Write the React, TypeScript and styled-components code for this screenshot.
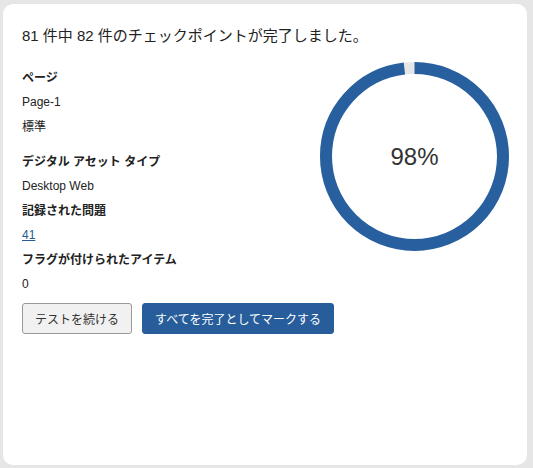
import styled, { createGlobalStyle } from "styled-components";

const GlobalStyle = createGlobalStyle`
  html, body {
    margin: 0;
    padding: 0;
    background: #e6e6e6;
  }
  body {
    font-family: "Liberation Sans", "Noto Sans CJK JP", sans-serif;
    color: #222;
  }
`;

const Page = styled.div`
  padding: 4px 6px 3px 3px;
  height: 468px;
  box-sizing: border-box;
`;

const Card = styled.div`
  background: #fff;
  border-radius: 10px;
  height: 100%;
  box-sizing: border-box;
  padding: 23px 18px 22px 19px;
`;

const Title = styled.h2`
  margin: 0 0 25px;
  font-size: 15px;
  font-weight: normal;
  color: #222;
  line-height: 18px;
`;

const Body = styled.div`
  display: grid;
  grid-template-columns: 1fr auto;
  align-items: start;
`;

const Details = styled.dl`
  margin: 0;
  display: flex;
  flex-direction: column;
`;

const Term = styled.dt<{ $gap?: number }>`
  font-size: 12px;
  font-weight: bold;
  line-height: 16px;
  margin-top: ${({ $gap }) => $gap ?? 9}px;
`;

const Value = styled.dd<{ $gap?: number }>`
  margin: ${({ $gap }) => $gap ?? 8}px 0 0;
  font-size: 12px;
  line-height: 16px;
`;

const IssueLink = styled.a`
  color: #2a5a96;
  text-decoration: underline;
`;

const Actions = styled.div`
  grid-column: 1 / -1;
  display: flex;
  gap: 10px;
  margin-top: 11px;
`;

const Button = styled.button<{ $primary?: boolean }>`
  font-family: inherit;
  font-size: 12px;
  height: 31px;
  border-radius: 3px;
  padding: 0 12px;
  border: 1px solid ${({ $primary }) => ($primary ? "#275d9b" : "#999")};
  background: ${({ $primary }) => ($primary ? "#275d9b" : "#f1f1f1")};
  color: ${({ $primary }) => ($primary ? "#fff" : "#333")};
  white-space: nowrap;
  cursor: pointer;
`;

const Chart = styled.div`
  position: relative;
  width: 189px;
  height: 189px;
  margin-top: -8px;
`;

const ChartLabel = styled.div`
  position: absolute;
  inset: 0;
  display: flex;
  align-items: center;
  justify-content: center;
  font-size: 24px;
  color: #333;
`;

const Donut = ({ percent }: { percent: number }) => {
  const r = 88.5;
  const c = 2 * Math.PI * r;
  return (
    <Chart>
      <svg width="189" height="189" viewBox="0.5 0.5 189 189">
        <circle cx="95" cy="95" r={r} fill="none" stroke="#e6e6e6" strokeWidth="12" />
        <circle
          cx="95"
          cy="95"
          r={r}
          fill="none"
          stroke="#285f9e"
          strokeWidth="12"
          strokeDasharray={`${(c * percent) / 100} ${c}`}
          transform="rotate(-90 95 95)"
        />
      </svg>
      <ChartLabel>{percent}%</ChartLabel>
    </Chart>
  );
};

export default function App() {
  return (
    <>
      <GlobalStyle />
      <Page>
        <Card>
          <Title>81 件中 82 件のチェックポイントが完了しました。</Title>
          <Body>
            <Details>
              <Term $gap={0}>ページ</Term>
              <Value>Page-1</Value>
              <Value $gap={9}>標準</Value>
              <Term $gap={19}>デジタル アセット タイプ</Term>
              <Value>Desktop Web</Value>
              <Term>記録された問題</Term>
              <Value>
                <IssueLink href="#">41</IssueLink>
              </Value>
              <Term>フラグが付けられたアイテム</Term>
              <Value>0</Value>
            </Details>
            <Donut percent={98} />
            <Actions>
              <Button>テストを続ける</Button>
              <Button $primary>すべてを完了としてマークする</Button>
            </Actions>
          </Body>
        </Card>
      </Page>
    </>
  );
}
